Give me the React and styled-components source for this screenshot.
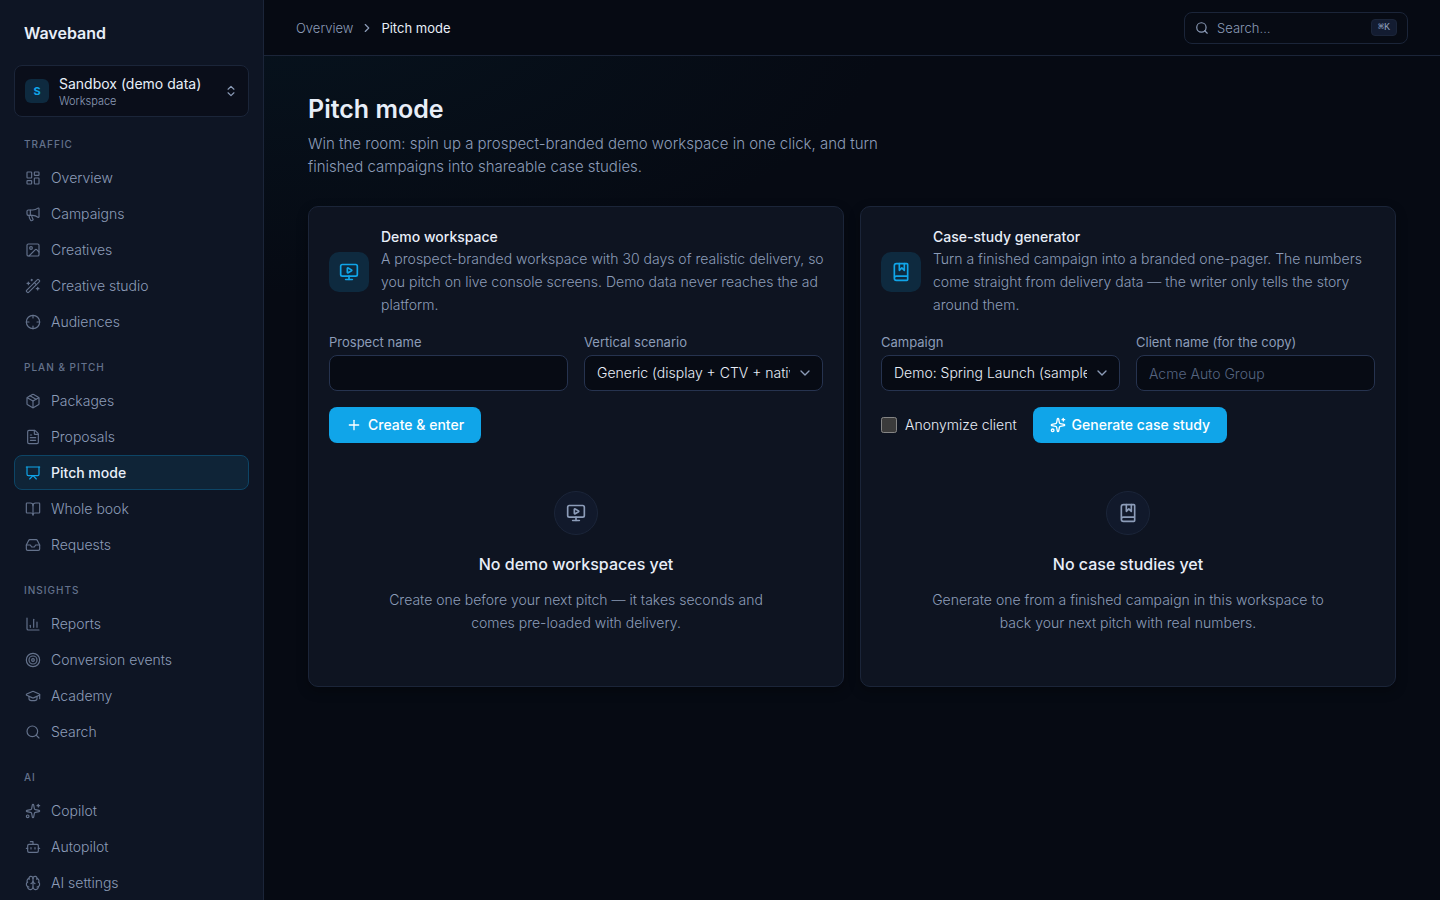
import React from 'react';
import styled, { createGlobalStyle } from 'styled-components';
import {
  BookMarked,
  BookOpen,
  Bot,
  Brain,
  ChartColumn,
  ChevronDown,
  ChevronRight,
  ChevronsUpDown,
  Crosshair,
  FileText,
  GraduationCap,
  Image,
  Inbox,
  LayoutDashboard,
  Megaphone,
  MonitorPlay,
  Package,
  Plus,
  Presentation,
  Search,
  Sparkles,
  Target,
  WandSparkles,
} from 'lucide-react';

const colors = {
  page: '#060a13',
  sidebar: '#0e1524',
  card: '#0e1421',
  raised: '#0a0e1a',
  field: '#070b14',
  line: '#1b2539',
  fieldLine: '#26334f',
  text: '#e8eef8',
  muted: '#8c9cb8',
  faint: '#64728c',
  accent: '#10a5e9',
  accentSoft: '#0e2a3f',
};

const GlobalStyle = createGlobalStyle`
  * {
    box-sizing: border-box;
  }

  body {
    margin: 0;
    background: ${colors.page};
    color: ${colors.text};
    color-scheme: dark;
    font-family: Inter, 'Liberation Sans', sans-serif;
    font-size: 14px;
    line-height: 20px;
  }

  button, input, select {
    font: inherit;
    color: inherit;
  }

  h1, h2, h3, p {
    margin: 0;
  }
`;

const Shell = styled.div`
  display: grid;
  grid-template-columns: 264px 1fr;
  min-height: 100vh;
`;

const Sidebar = styled.aside`
  position: sticky;
  top: 0;
  height: 100vh;
  overflow: hidden;
  padding: 21px 14px 0;
  background: ${colors.sidebar};
  border-right: 1px solid ${colors.line};
`;

const Brand = styled.div`
  padding: 0 10px;
  margin-bottom: 20px;
  font-size: 16px;
  font-weight: 600;
  line-height: 24px;
`;

const Switcher = styled.button`
  display: flex;
  align-items: center;
  gap: 10px;
  width: 100%;
  height: 52px;
  padding: 0 10px;
  background: ${colors.raised};
  border: 1px solid ${colors.line};
  border-radius: 8px;
  text-align: left;

  svg {
    color: ${colors.muted};
  }
`;

const Avatar = styled.span`
  display: grid;
  place-items: center;
  width: 24px;
  height: 24px;
  border-radius: 6px;
  background: ${colors.accentSoft};
  color: ${colors.accent};
  font-size: 11px;
  font-weight: 700;
`;

const SwitcherText = styled.span`
  flex: 1;
  display: flex;
  flex-direction: column;
`;

const SwitcherName = styled.span`
  font-size: 14px;
  line-height: 20px;
`;

const SwitcherKind = styled.span`
  font-size: 11px;
  font-weight: 300;
  line-height: 14px;
  color: ${colors.muted};
`;

const NavSections = styled.nav`
  display: flex;
  flex-direction: column;
  gap: 20px;
  margin-top: 19px;
`;

const NavHeading = styled.h2`
  padding: 0 10px;
  margin-bottom: 8px;
  font-size: 10px;
  font-weight: 500;
  line-height: 16px;
  letter-spacing: 1px;
  text-transform: uppercase;
  color: ${colors.faint};
`;

const NavList = styled.div`
  display: flex;
  flex-direction: column;
  gap: 1px;
`;

const NavLink = styled.a`
  display: flex;
  align-items: center;
  gap: 10px;
  height: 35px;
  padding: 0 10px;
  border: 1px solid ${({ $active }) => ($active ? '#0d4566' : 'transparent')};
  border-radius: 8px;
  background: ${({ $active }) => ($active ? '#0f2437' : 'transparent')};
  color: ${({ $active }) => ($active ? colors.text : colors.muted)};
  font-weight: ${({ $active }) => ($active ? 500 : 300)};
  text-decoration: none;

  svg {
    color: ${({ $active }) => ($active ? colors.accent : colors.faint)};
  }
`;

const Main = styled.div`
  min-width: 0;
  background: radial-gradient(900px 420px at 0 0, #07131e, transparent 70%);
`;

const Topbar = styled.header`
  display: flex;
  align-items: center;
  justify-content: space-between;
  height: 56px;
  padding: 0 32px;
  background: ${colors.page};
  border-bottom: 1px solid ${colors.line};
`;

const Breadcrumb = styled.nav`
  display: flex;
  align-items: center;
  gap: 7px;
  font-size: 13px;

  a {
    color: ${colors.muted};
    font-weight: 300;
    text-decoration: none;
  }

  svg {
    color: ${colors.muted};
  }
`;

const SearchButton = styled.button`
  display: flex;
  align-items: center;
  gap: 8px;
  width: 224px;
  height: 32px;
  padding: 0 10px;
  background: ${colors.field};
  border: 1px solid ${colors.line};
  border-radius: 8px;
  color: ${colors.muted};
  font-size: 13px;
  font-weight: 300;
  text-align: left;

  span {
    flex: 1;
  }
`;

const Kbd = styled.kbd`
  padding: 0 6px;
  background: #131c31;
  border: 1px solid ${colors.line};
  border-radius: 4px;
  font-family: 'Liberation Mono', monospace;
  font-size: 10px;
  line-height: 15px;
`;

const Content = styled.main`
  padding: 36px 44px;
`;

const PageTitle = styled.h1`
  font-size: 25px;
  font-weight: 600;
  line-height: 34px;
`;

const PageIntro = styled.p`
  max-width: 580px;
  margin: 6px 0 28px;
  font-size: 15px;
  font-weight: 300;
  line-height: 23px;
  color: ${colors.muted};
`;

const Cards = styled.div`
  display: grid;
  grid-template-columns: 1fr 1fr;
  gap: 16px;
`;

const Card = styled.section`
  display: flex;
  flex-direction: column;
  gap: 16px;
  min-width: 0;
  padding: 20px;
  background: ${colors.card};
  border: 1px solid ${colors.line};
  border-radius: 10px;
  box-shadow: 0 4px 12px rgba(0, 0, 0, 0.3);
`;

const CardHead = styled.div`
  display: flex;
  align-items: center;
  gap: 12px;
  margin-right: -8px;
`;

const IconTile = styled.span`
  display: grid;
  place-items: center;
  flex: none;
  width: 40px;
  height: 40px;
  border-radius: 10px;
  background: ${colors.accentSoft};
  color: ${colors.accent};
`;

const CardTitle = styled.h2`
  font-size: 14px;
  font-weight: 500;
  line-height: 20px;
`;

const CardText = styled.p`
  font-weight: 300;
  line-height: 23px;
  color: ${colors.muted};
`;

const Fields = styled.div`
  display: grid;
  grid-template-columns: 1fr 1fr;
  gap: 16px;
`;

const Field = styled.div`
  display: flex;
  flex-direction: column;
  gap: 3px;
  min-width: 0;
`;

const Label = styled.label`
  font-size: 13px;
  line-height: 20px;
  color: ${colors.muted};
`;

const TextInput = styled.input`
  width: 100%;
  height: 36px;
  padding: 0 12px;
  background: ${colors.field};
  border: 1px solid ${colors.fieldLine};
  border-radius: 8px;

  &::placeholder {
    color: #566580;
    font-weight: 300;
  }
`;

const SelectBox = styled.div`
  position: relative;

  svg {
    position: absolute;
    top: 10px;
    right: 10px;
    color: ${colors.muted};
    pointer-events: none;
  }
`;

const Select = styled(TextInput)`
  padding-right: 32px;
  font-weight: 300;
  appearance: none;
`;

const Actions = styled.div`
  display: flex;
  align-items: center;
  gap: 16px;
`;

const CheckLabel = styled.label`
  display: flex;
  align-items: center;
  gap: 8px;
  font-weight: 300;

  input {
    width: 16px;
    height: 16px;
    margin: 0;
  }
`;

const PrimaryButton = styled.button`
  display: flex;
  align-items: center;
  gap: 6px;
  height: 36px;
  padding: 0 17px;
  background: ${colors.accent};
  border: 0;
  border-radius: 8px;
  color: #fff;
  font-weight: 500;
`;

const Empty = styled.div`
  display: flex;
  flex-direction: column;
  align-items: center;
  padding: 32px 24px;
  text-align: center;
`;

const EmptyIcon = styled.span`
  display: grid;
  place-items: center;
  width: 44px;
  height: 44px;
  margin-bottom: 16px;
  background: #11192b;
  border: 1px solid ${colors.line};
  border-radius: 50%;
  color: ${colors.muted};
`;

const EmptyTitle = styled.h3`
  font-size: 16px;
  font-weight: 500;
  line-height: 27px;
  margin-bottom: 10px;
`;

const EmptyText = styled(CardText)`
  max-width: 400px;
`;

const sections = [
  {
    title: 'Traffic',
    items: [
      { label: 'Overview', icon: LayoutDashboard },
      { label: 'Campaigns', icon: Megaphone },
      { label: 'Creatives', icon: Image },
      { label: 'Creative studio', icon: WandSparkles },
      { label: 'Audiences', icon: Crosshair },
    ],
  },
  {
    title: 'Plan & pitch',
    items: [
      { label: 'Packages', icon: Package },
      { label: 'Proposals', icon: FileText },
      { label: 'Pitch mode', icon: Presentation, active: true },
      { label: 'Whole book', icon: BookOpen },
      { label: 'Requests', icon: Inbox },
    ],
  },
  {
    title: 'Insights',
    items: [
      { label: 'Reports', icon: ChartColumn },
      { label: 'Conversion events', icon: Target },
      { label: 'Academy', icon: GraduationCap },
      { label: 'Search', icon: Search },
    ],
  },
  {
    title: 'AI',
    items: [
      { label: 'Copilot', icon: Sparkles },
      { label: 'Autopilot', icon: Bot },
      { label: 'AI settings', icon: Brain },
    ],
  },
];

function SelectField({ id, label, options }) {
  return (
    <Field>
      <Label htmlFor={id}>{label}</Label>
      <SelectBox>
        <Select as="select" id={id}>
          {options.map((option) => (
            <option key={option}>{option}</option>
          ))}
        </Select>
        <ChevronDown size={16} aria-hidden="true" />
      </SelectBox>
    </Field>
  );
}

function InputField({ id, label, placeholder }) {
  return (
    <Field>
      <Label htmlFor={id}>{label}</Label>
      <TextInput id={id} type="text" placeholder={placeholder} />
    </Field>
  );
}

function CardIntro({ icon: Icon, title, children }) {
  return (
    <CardHead>
      <IconTile>
        <Icon size={20} aria-hidden="true" />
      </IconTile>
      <div>
        <CardTitle>{title}</CardTitle>
        <CardText>{children}</CardText>
      </div>
    </CardHead>
  );
}

function EmptyState({ icon: Icon, title, children }) {
  return (
    <Empty>
      <EmptyIcon>
        <Icon size={20} aria-hidden="true" />
      </EmptyIcon>
      <EmptyTitle>{title}</EmptyTitle>
      <EmptyText>{children}</EmptyText>
    </Empty>
  );
}

function AppSidebar() {
  return (
    <Sidebar>
      <Brand>Waveband</Brand>
      <Switcher type="button">
        <Avatar>S</Avatar>
        <SwitcherText>
          <SwitcherName>Sandbox (demo data)</SwitcherName>
          <SwitcherKind>Workspace</SwitcherKind>
        </SwitcherText>
        <ChevronsUpDown size={14} aria-hidden="true" />
      </Switcher>
      <NavSections aria-label="Main">
        {sections.map(({ title, items }) => (
          <section key={title}>
            <NavHeading>{title}</NavHeading>
            <NavList>
              {items.map(({ label, icon: Icon, active }) => (
                <NavLink
                  key={label}
                  href="#"
                  $active={active}
                  aria-current={active ? 'page' : undefined}
                >
                  <Icon size={16} strokeWidth={1.75} aria-hidden="true" />
                  {label}
                </NavLink>
              ))}
            </NavList>
          </section>
        ))}
      </NavSections>
    </Sidebar>
  );
}

function App() {
  return (
    <Shell>
      <GlobalStyle />
      <AppSidebar />
      <Main>
        <Topbar>
          <Breadcrumb aria-label="Breadcrumb">
            <a href="#">Overview</a>
            <ChevronRight size={14} aria-hidden="true" />
            <span aria-current="page">Pitch mode</span>
          </Breadcrumb>
          <SearchButton type="button">
            <Search size={14} aria-hidden="true" />
            <span>Search…</span>
            <Kbd>⌘K</Kbd>
          </SearchButton>
        </Topbar>
        <Content>
          <PageTitle>Pitch mode</PageTitle>
          <PageIntro>
            Win the room: spin up a prospect-branded demo workspace in one
            click, and turn finished campaigns into shareable case studies.
          </PageIntro>
          <Cards>
            <Card>
              <CardIntro icon={MonitorPlay} title="Demo workspace">
                A prospect-branded workspace with 30 days of realistic
                delivery, so you pitch on live console screens. Demo data never
                reaches the ad platform.
              </CardIntro>
              <Fields>
                <InputField id="prospect" label="Prospect name" />
                <SelectField
                  id="scenario"
                  label="Vertical scenario"
                  options={['Generic (display + CTV + native)']}
                />
              </Fields>
              <Actions>
                <PrimaryButton type="button">
                  <Plus size={16} aria-hidden="true" />
                  Create &amp; enter
                </PrimaryButton>
              </Actions>
              <EmptyState icon={MonitorPlay} title="No demo workspaces yet">
                Create one before your next pitch — it takes seconds and comes
                pre-loaded with delivery.
              </EmptyState>
            </Card>
            <Card>
              <CardIntro icon={BookMarked} title="Case-study generator">
                Turn a finished campaign into a branded one-pager. The numbers
                come straight from delivery data — the writer only tells the
                story around them.
              </CardIntro>
              <Fields>
                <SelectField
                  id="campaign"
                  label="Campaign"
                  options={['Demo: Spring Launch (sample data)']}
                />
                <InputField
                  id="client"
                  label="Client name (for the copy)"
                  placeholder="Acme Auto Group"
                />
              </Fields>
              <Actions>
                <CheckLabel>
                  <input type="checkbox" />
                  Anonymize client
                </CheckLabel>
                <PrimaryButton type="button">
                  <Sparkles size={16} aria-hidden="true" />
                  Generate case study
                </PrimaryButton>
              </Actions>
              <EmptyState icon={BookMarked} title="No case studies yet">
                Generate one from a finished campaign in this workspace to back
                your next pitch with real numbers.
              </EmptyState>
            </Card>
          </Cards>
        </Content>
      </Main>
    </Shell>
  );
}

export default App;
